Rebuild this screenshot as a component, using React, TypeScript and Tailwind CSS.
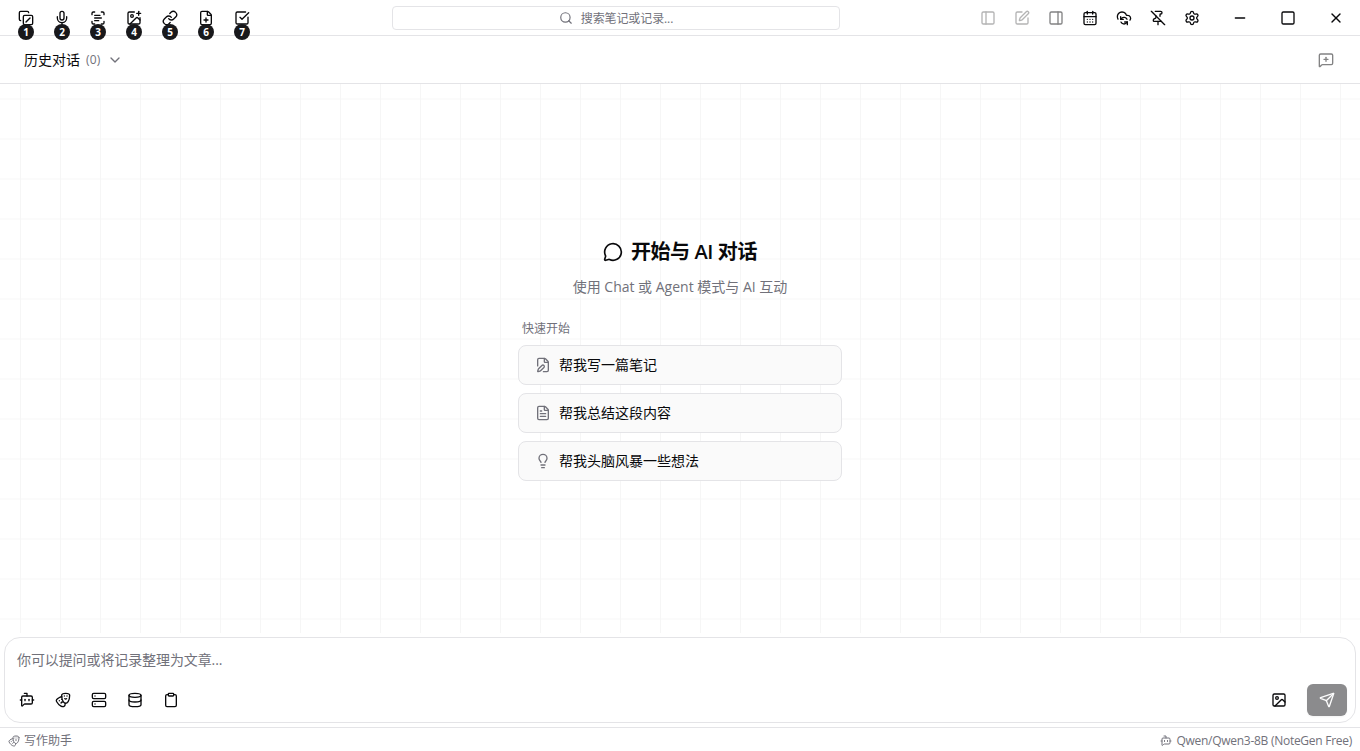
import * as React from 'react';
import {
  BotMessageSquare,
  CalendarDays,
  CheckSquare,
  ChevronDown,
  Clipboard,
  CloudSync,
  CopySlash,
  Database,
  Drama,
  FilePen,
  FilePlus,
  FileText,
  Image,
  ImagePlus,
  Lightbulb,
  Link,
  MessageCircle,
  MessageSquarePlus,
  Mic,
  Minus,
  PanelLeft,
  PanelRight,
  PinOff,
  ScanText,
  Search,
  Send,
  Server,
  Settings,
  Square,
  SquarePen,
  X,
  type LucideIcon,
} from 'lucide-react';

const recordTools: LucideIcon[] = [CopySlash, Mic, ScanText, ImagePlus, Link, FilePlus, CheckSquare];

const titleActions: { icon: LucideIcon; className?: string }[] = [
  { icon: PanelLeft, className: 'opacity-30' },
  { icon: SquarePen, className: 'opacity-30' },
  { icon: PanelRight, className: 'opacity-50' },
  { icon: CalendarDays },
  { icon: CloudSync },
  { icon: PinOff },
  { icon: Settings },
];

const windowControls: LucideIcon[] = [Minus, Square, X];

const quickPrompts: { icon: LucideIcon; text: string }[] = [
  { icon: FilePen, text: '帮我写一篇笔记' },
  { icon: FileText, text: '帮我总结这段内容' },
  { icon: Lightbulb, text: '帮我头脑风暴一些想法' },
];

const chatTools: LucideIcon[] = [BotMessageSquare, Drama, Server, Database, Clipboard];

function TitleBar() {
  return (
    <header className="h-9 shrink-0 flex items-center border-b border-[#e4e4e7]">
      <div className="w-[392px] flex items-center gap-1 pl-2.5">
        {recordTools.map((Icon, i) => (
          <button key={i} className="relative size-8 flex items-center justify-center">
            <Icon className="size-4" />
            <span className="absolute left-2 top-[22px] z-10 size-4 rounded-full bg-[#18181b] text-white text-[10px] leading-4 font-bold text-center">
              {i + 1}
            </span>
          </button>
        ))}
      </div>

      <button className="w-[448px] h-6 flex items-center justify-center gap-2 rounded border border-[#e4e4e7] text-xs text-[#71717a]">
        <Search className="size-3.5" />
        <span className="pt-0.5 tracking-[-0.1px]">搜索笔记或记录...</span>
      </button>

      <div className="flex-1 flex items-center justify-end">
        <div className="flex items-center gap-0.5 mr-2">
          {titleActions.map(({ icon: Icon, className }, i) => (
            <button key={i} className="size-8 flex items-center justify-center">
              <Icon className={`size-4 ${className ?? ''}`} />
            </button>
          ))}
        </div>
        {windowControls.map((Icon, i) => (
          <button key={i} className="w-12 h-8 flex items-center justify-center">
            <Icon className="size-4" />
          </button>
        ))}
      </div>
    </header>
  );
}

function ChatHeader() {
  return (
    <div className="h-12 shrink-0 flex items-center justify-between pl-6 pr-[26px] border-b border-[#e4e4e7]">
      <button className="flex items-center text-sm">
        <span>历史对话</span>
        <span className="ml-1.5 pt-px text-xs tracking-[0.2px] text-[#71717a]">(0)</span>
        <ChevronDown className="ml-1.5 size-4 text-[#71717a]" />
      </button>
      <MessageSquarePlus className="size-4 opacity-50" />
    </div>
  );
}

function EmptyState() {
  return (
    <div className="flex-1 flex flex-col items-center justify-center bg-center bg-[size:40px_40px] bg-[linear-gradient(to_right,#f6f6f6_1px,transparent_1px),linear-gradient(to_bottom,#f6f6f6_1px,transparent_1px)]">
      <div className="flex items-center gap-2 mb-2">
        <MessageCircle className="size-5" />
        <h2 className="text-xl leading-8 font-bold tracking-[-0.4px]">
          开始与 <span className="font-semibold">AI</span> 对话
        </h2>
      </div>
      <p className="text-sm leading-[21px] text-[#71717a]">使用 Chat 或 Agent 模式与 AI 互动</p>

      <div className="w-[324px] mt-6">
        <p className="px-1 mb-2 text-xs text-[#71717a]">快速开始</p>
        <div className="flex flex-col gap-2">
          {quickPrompts.map(({ icon: Icon, text }) => (
            <button
              key={text}
              className="h-10 flex items-center gap-2 px-4 rounded-lg border border-[#e4e4e7] bg-[#fafafa] text-sm"
            >
              <Icon className="size-4 text-[#71717a]" />
              <span>{text}</span>
            </button>
          ))}
        </div>
      </div>
    </div>
  );
}

function ChatInput() {
  return (
    <div className="mx-1 mt-1 mb-1 h-[86px] shrink-0 flex flex-col justify-between rounded-2xl border border-[#e4e4e7] bg-white">
      <p className="pl-3 pt-3 text-sm tracking-[-0.1px] text-[#71717a]">你可以提问或将记录整理为文章...</p>
      <div className="flex items-center justify-between pl-1.5 pr-2 pb-1.5">
        <div className="flex items-center gap-1">
          {chatTools.map((Icon, i) => (
            <button key={i} className="size-8 flex items-center justify-center">
              <Icon className="size-4" />
            </button>
          ))}
        </div>
        <div className="flex items-center gap-3">
          <button className="size-8 flex items-center justify-center">
            <Image className="size-4" />
          </button>
          <button className="w-10 h-8 flex items-center justify-center rounded-md bg-[#8b8b8d] text-[#fcfcfc] shadow-xs">
            <Send className="size-4" />
          </button>
        </div>
      </div>
    </div>
  );
}

function StatusBar() {
  return (
    <footer className="h-6 shrink-0 flex items-center justify-between px-2 pt-0.5 border-t border-[#e4e4e7] text-xs text-[#71717a]">
      <div className="flex items-center gap-1">
        <Drama className="size-3" />
        <span>写作助手</span>
      </div>
      <div className="flex items-center gap-1">
        <BotMessageSquare className="size-3" />
        <span className="tracking-[-0.27px]">Qwen/Qwen3-8B (NoteGen Free)</span>
      </div>
    </footer>
  );
}

export default function App() {
  return (
    <div className="h-screen flex flex-col overflow-hidden bg-white text-[#09090b] font-['Open_Sans','Noto_Sans_CJK_SC',sans-serif]">
      <TitleBar />
      <ChatHeader />
      <EmptyState />
      <ChatInput />
      <StatusBar />
    </div>
  );
}
